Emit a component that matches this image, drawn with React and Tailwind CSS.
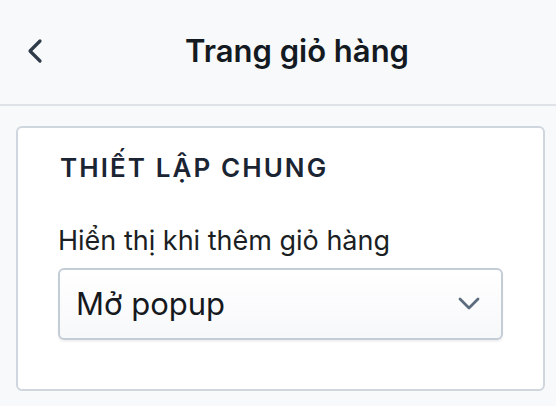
import React from "react";

function ChevronLeft() {
  return (
    <svg width="18" height="26" viewBox="0 0 18 26" fill="none">
      <path d="M14 3 L4 13 L14 23" stroke="#303b4a" strokeWidth="3.2" strokeLinecap="round" strokeLinejoin="round" />
    </svg>
  );
}

function ChevronDown() {
  return (
    <svg width="22" height="13" viewBox="0 0 22 13" fill="none">
      <path d="M2 2 L11 11 L20 2" stroke="#5c6b7d" strokeWidth="2.8" strokeLinecap="round" strokeLinejoin="round" />
    </svg>
  );
}

export default function App() {
  return (
    <div className="w-[556px] h-[406px] bg-[#f8f9fb] overflow-hidden" style={{ fontFamily: "Inter, 'Noto Sans', sans-serif" }}>
      <header className="h-[106px] flex items-center relative border-b-2 border-[#dfe2e6] bg-[#f8f9fb]">
        <button className="absolute left-[26px] top-[38px]">
          <ChevronLeft />
        </button>
        <h1 className="w-full text-center text-[31px] font-semibold text-[#141a21] pl-[38px] pb-[2px]">Trang giỏ hàng</h1>
      </header>
      <div className="ml-4 mr-[11px] mt-5 h-[265px] bg-white border-2 border-[#cfd6de] rounded-[6px] pt-[20px] pl-[40px] pr-[40px]">
        <h2 className="pl-[2px] text-[26px] font-semibold tracking-[0.08em] text-[#1a2433]">THIẾT LẬP CHUNG</h2>
        <p className="mt-[34px] text-[27px] text-[#1b1f24]">Hiển thị khi thêm giỏ hàng</p>
        <div className="mt-[6px] h-[72px] flex items-center justify-between rounded-[6px] border-2 border-[#c4ccd6] bg-[linear-gradient(#ffffff,#f7f8fa)] shadow-[0_2px_2px_rgba(0,0,0,0.06)] pl-[16px] pr-[21px]">
          <span className="text-[31px] text-[#15191e] pt-[2px]">Mở popup</span>
          <ChevronDown />
        </div>
      </div>
    </div>
  );
}
